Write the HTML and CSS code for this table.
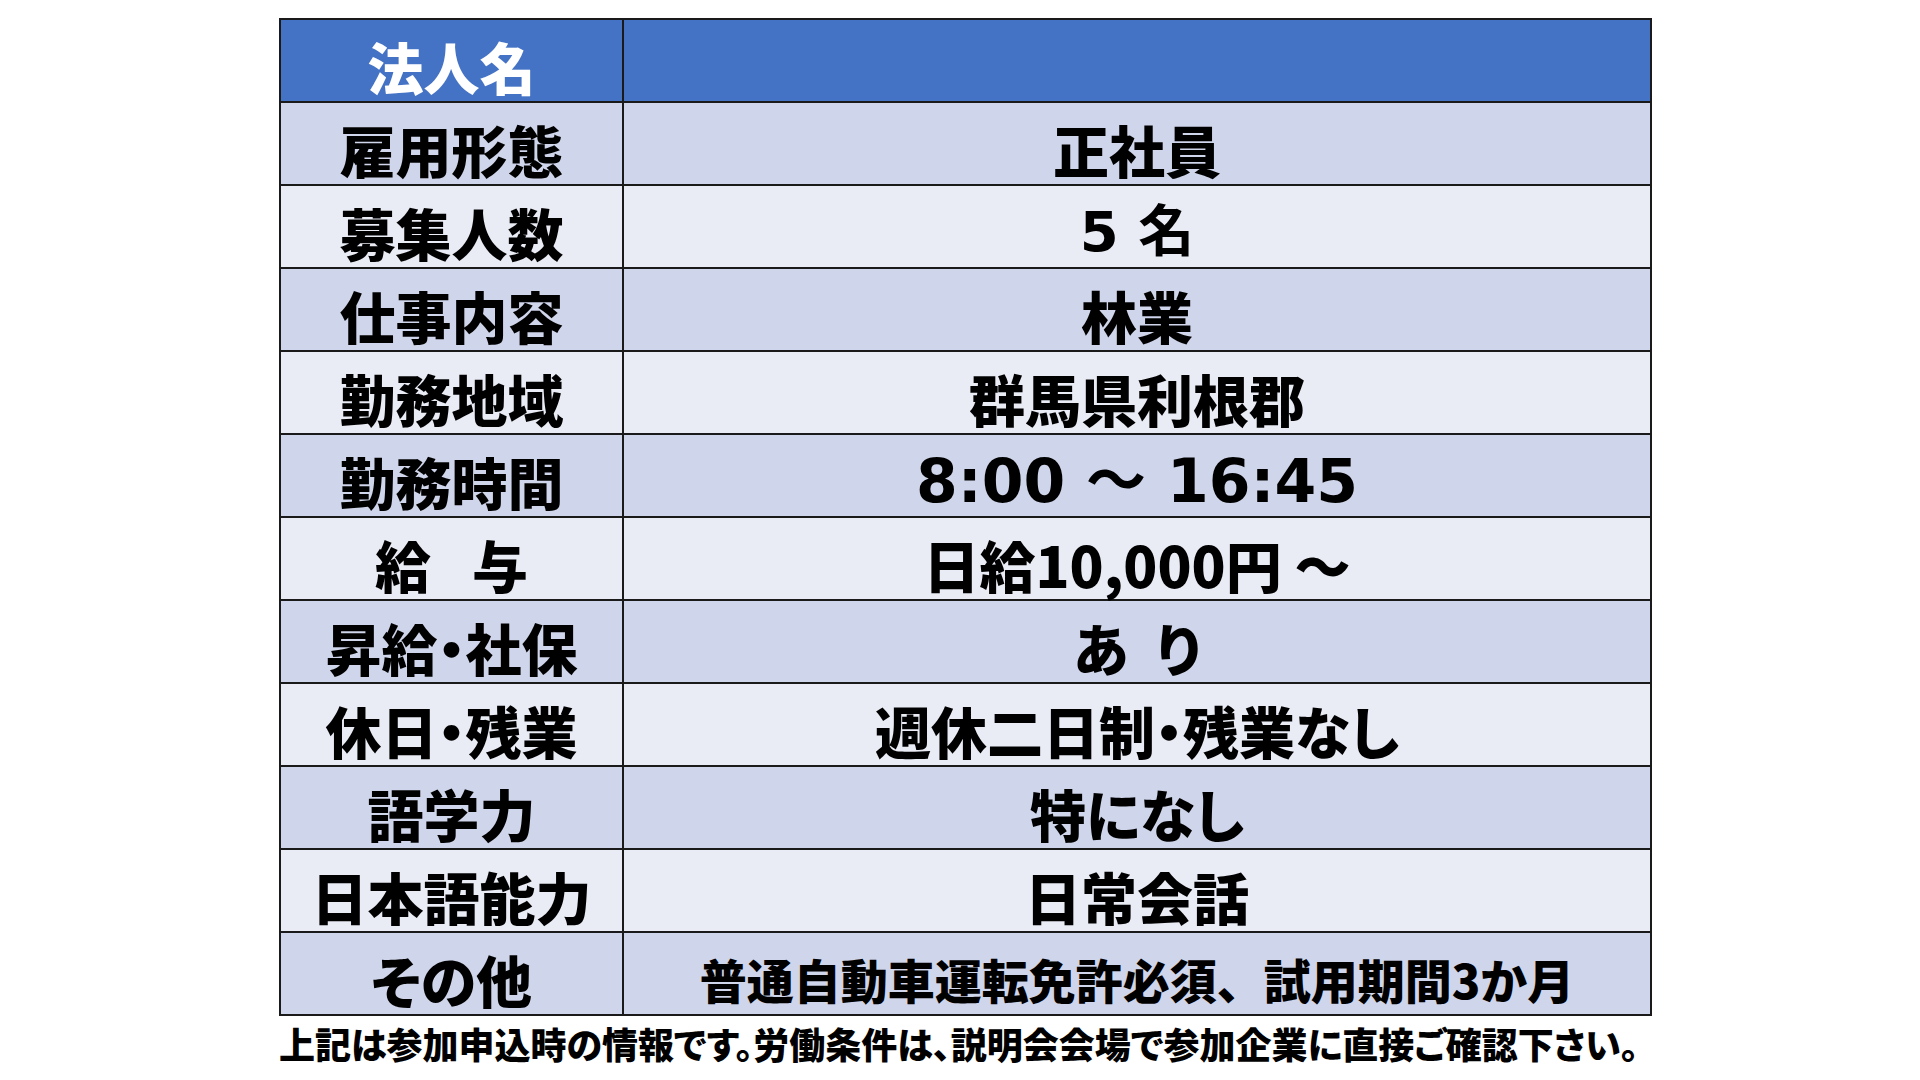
FILE: index.html
```html
<!DOCTYPE html>
<html lang="ja">
<head>
<meta charset="utf-8">
<title>求人情報</title>
<link rel="stylesheet" href="styles.css">
</head>
<body>
<div class="page">
  <table class="job">
    <tr class="head">
      <th class="label">法人名</th>
      <td class="value"></td>
    </tr>
    <tr class="odd">
      <th class="label">雇用形態</th>
      <td class="value">正社員</td>
    </tr>
    <tr class="even">
      <th class="label">募集人数</th>
      <td class="value wide">5 名</td>
    </tr>
    <tr class="odd">
      <th class="label">仕事内容</th>
      <td class="value">林業</td>
    </tr>
    <tr class="even">
      <th class="label">勤務地域</th>
      <td class="value">群馬県利根郡</td>
    </tr>
    <tr class="odd">
      <th class="label">勤務時間</th>
      <td class="value wide time">8:00 ～ 16:45</td>
    </tr>
    <tr class="even">
      <th class="label">給&ensp; 与</th>
      <td class="value">日給10,000円 ～</td>
    </tr>
    <tr class="odd">
      <th class="label">昇給・社保</th>
      <td class="value">あ&ensp;り</td>
    </tr>
    <tr class="even">
      <th class="label">休日・残業</th>
      <td class="value">週休二日制・残業なし</td>
    </tr>
    <tr class="odd">
      <th class="label">語学力</th>
      <td class="value">特になし</td>
    </tr>
    <tr class="even">
      <th class="label">日本語能力</th>
      <td class="value">日常会話</td>
    </tr>
    <tr class="odd">
      <th class="label">その他</th>
      <td class="value small">普通自動車運転免許必須、試用期間3か月</td>
    </tr>
  </table>
  <p class="note">上記は参加申込時の情報です。労働条件は、説明会会場で参加企業に直接ご確認下さい。</p>
</div>
</body>
</html>
```
FILE: styles.css
```css
html, body {
  margin: 0;
  padding: 0;
  background: #ffffff;
}

.page {
  padding: 18px 0 0 279px;
  font-family: "Noto Sans CJK JP", "Noto Sans", sans-serif;
  color: #000000;
}

.job {
  border-collapse: collapse;
  width: 1373px;
  table-layout: fixed;
  font-feature-settings: "palt";
}

.job th,
.job td {
  border: 2px solid #1a1a1a;
  height: 83px;
  padding: 10px 0 0 0;
  box-sizing: border-box;
  text-align: center;
  vertical-align: middle;
  font-size: 56px;
  font-weight: 900;
  line-height: 1;
  white-space: nowrap;
}

.job .label {
  width: 343px;
}

.head {
  background: #4472c4;
  color: #ffffff;
}

.odd {
  background: #cfd5ea;
}

.even {
  background: #e9ebf5;
}

.value.wide {
  font-family: "DejaVu Sans", "Noto Sans CJK JP", sans-serif;
  font-weight: 700;
}

.value.time {
  font-size: 60px;
}

.value.small {
  font-size: 47px;
  font-feature-settings: normal;
}

.note {
  margin: 2px 0 0 0;
  font-size: 36px;
  font-weight: 900;
  line-height: 1.4;
  font-feature-settings: "palt";
  white-space: nowrap;
}
```
